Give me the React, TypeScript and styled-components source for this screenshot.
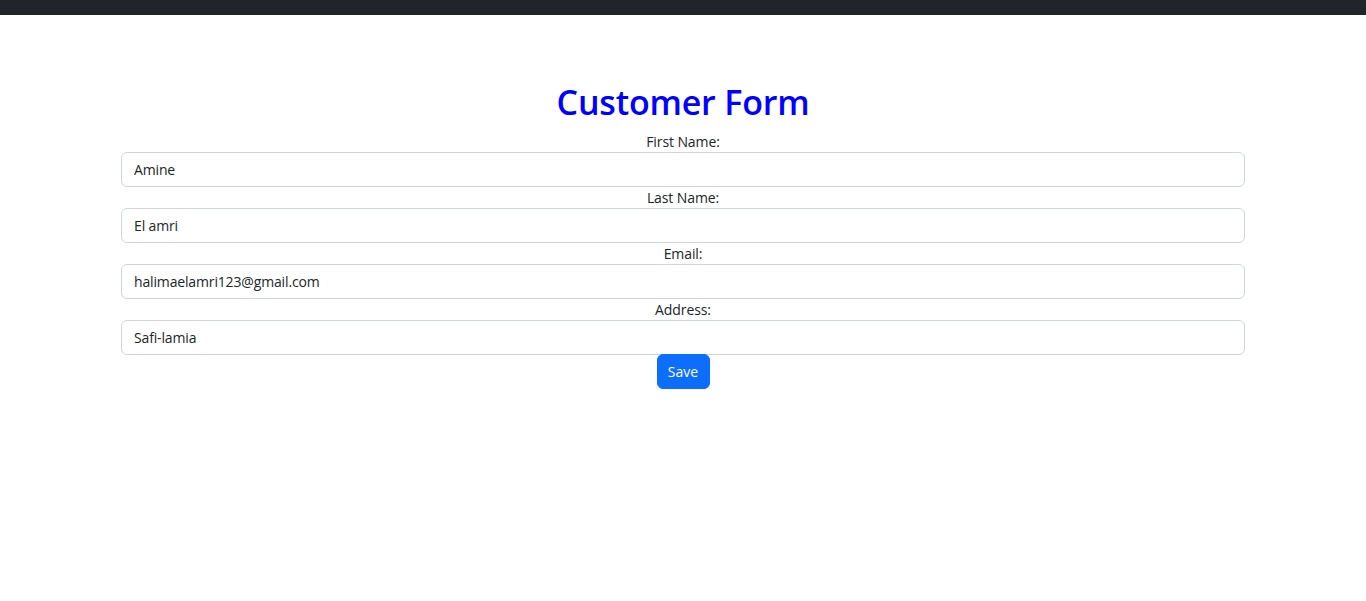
import React from "react";
import styled, { createGlobalStyle } from "styled-components";

const Global = createGlobalStyle`
  * { box-sizing: border-box; }
  body {
    margin: 0;
    font-family: "Open Sans", "Noto Sans", sans-serif;
    font-size: 14px;
    line-height: 1.5;
    color: #212529;
    background: #fff;
  }
`;

const TopBar = styled.div`
  height: 15px;
  background: #212529;
`;

const Container = styled.div`
  width: 1124px;
  margin: 0 auto;
  padding-top: 66px;
  text-align: center;
`;

const Title = styled.h1`
  margin: 0 0 8px;
  height: 42px;
  font-size: 34px;
  font-weight: 600;
  line-height: 42px;
  letter-spacing: -0.2px;
  color: #0000ff;
`;

const Form = styled.form`
  display: flex;
  flex-direction: column;
  align-items: center;
`;

const Field = styled.div`
  width: 100%;
  display: flex;
  flex-direction: column;
`;

const Label = styled.label`
  display: block;
  height: 21px;
  font-size: 14px;
  line-height: 21px;
  letter-spacing: -0.1px;
`;

const Input = styled.input`
  display: block;
  width: 100%;
  height: 35px;
  padding: 6px 12px;
  font-family: inherit;
  font-size: 14px;
  line-height: 1.5;
  letter-spacing: -0.15px;
  color: #212529;
  background: #fff;
  border: 1px solid #ced4da;
  border-radius: 6px;
  outline: none;
`;

const Button = styled.button`
  width: 53px;
  height: 35px;
  margin-top: -1px;
  padding: 0;
  font-family: inherit;
  font-size: 14px;
  color: #fff;
  background: #0d6efd;
  border: 1px solid #0d6efd;
  border-radius: 6px;
  cursor: pointer;
`;

const fields = [
  { label: "First Name:", value: "Amine" },
  { label: "Last Name:", value: "El amri" },
  { label: "Email:", value: "halimaelamri123@gmail.com" },
  { label: "Address:", value: "Safi-lamia" },
];

export default function App() {
  return (
    <>
      <Global />
      <TopBar />
      <Container>
        <Title>Customer Form</Title>
        <Form onSubmit={(e) => e.preventDefault()}>
          {fields.map((f) => (
            <Field key={f.label}>
              <Label>{f.label}</Label>
              <Input defaultValue={f.value} />
            </Field>
          ))}
          <Button type="submit">Save</Button>
        </Form>
      </Container>
    </>
  );
}
